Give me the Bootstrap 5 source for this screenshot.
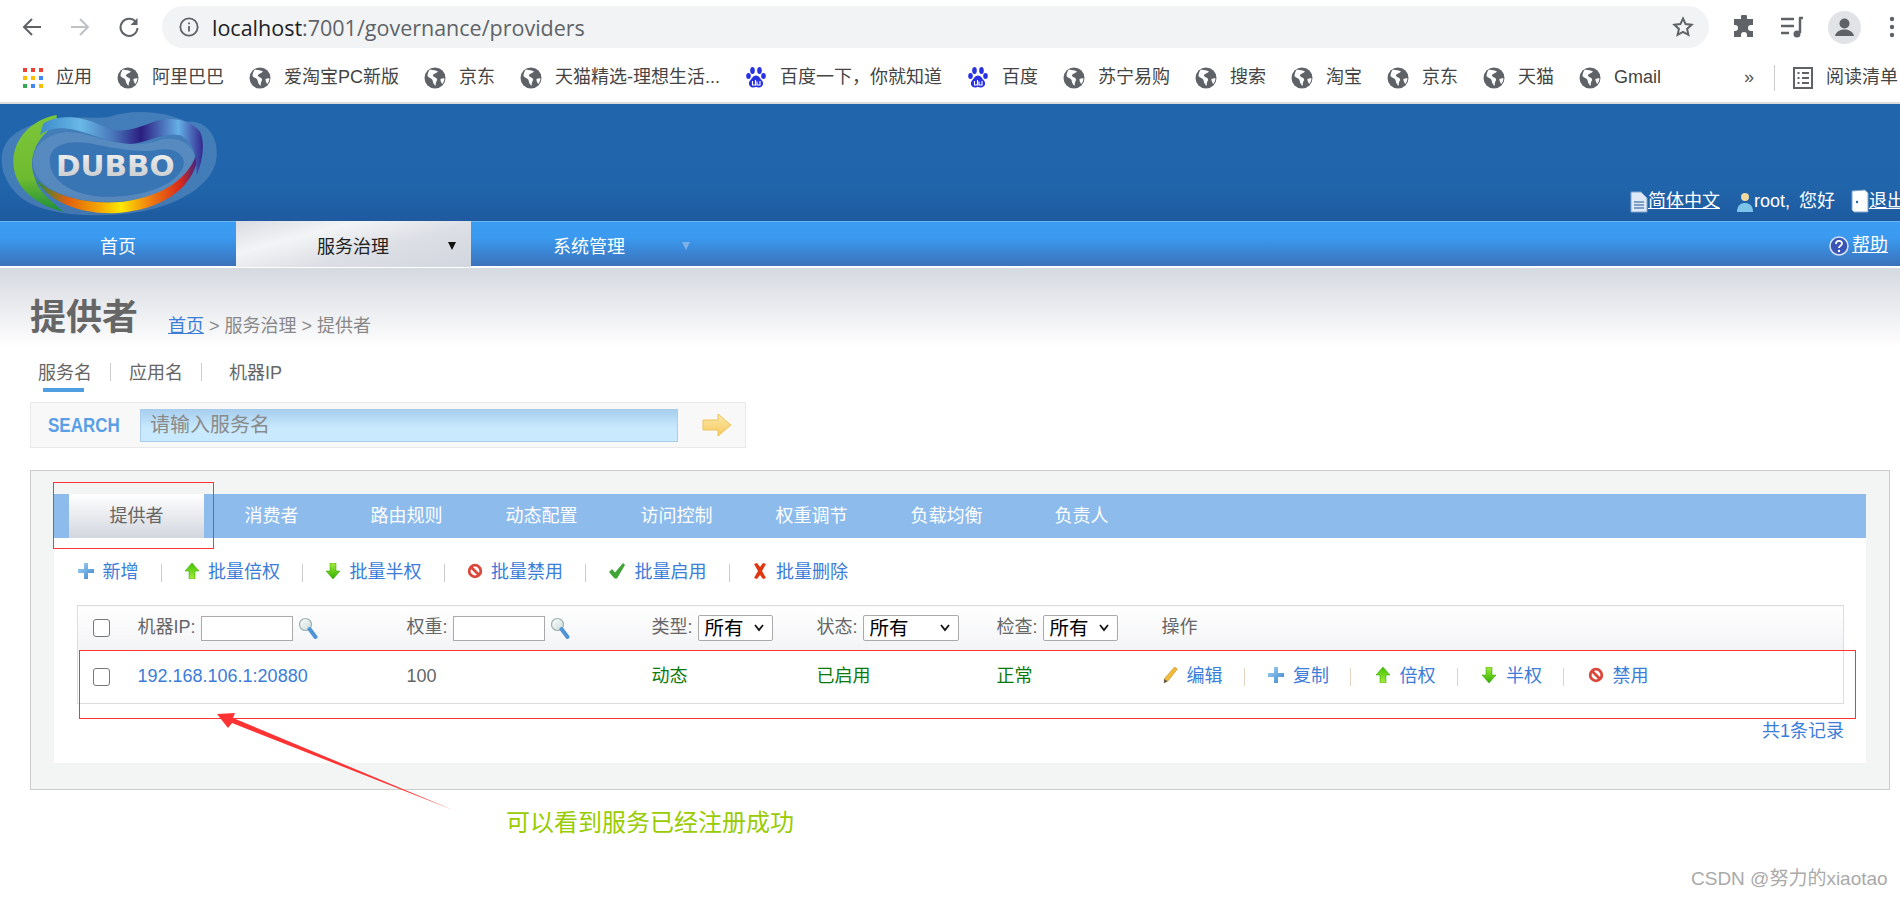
<!DOCTYPE html>
<html lang="zh-CN">
<head>
    <meta charset="UTF-8">
    <meta name="viewport" content="width=device-width, initial-scale=1.0">
    <title>提供者 - Dubbo</title>
    <link href="https://cdn.jsdelivr.net/npm/bootstrap@5.3.0/dist/css/bootstrap.min.css" rel="stylesheet">
    <style>
        html, body { height: 897px; overflow: hidden; }
        body { position: relative; background: #fff; color: #666; font: 18px/1.2 "Liberation Sans", "Noto Sans CJK SC", sans-serif; }
        a { color: #3b7dd8; text-decoration: none; }

        /* browser chrome */
        .tool-row { height: 54px; padding-left: 22px; }
        .tool-gap { margin-left: 28px; }
        .tool-ext { margin-left: 23px; }
        .addr-bar { margin-left: 22px; width: 1547px; height: 42px; border-radius: 21px; background: #f1f3f4; padding: 0 15px 0 17px; font: 21.500px "Open Sans", sans-serif; color: #5f6368; }
        .addr-bar b { font-weight: 400; color: #202124; }
        .addr-text { margin-left: 13px; }
        .mark-row { height: 50px; padding: 2px 0 2px 23px; border-bottom: 2px solid #dcdcdc; color: #444; white-space: nowrap; overflow: hidden; gap: 25px; }
        .mark-item { display: flex; align-items: center; gap: 13px; flex: none; }
        .mark-more { margin-left: 58px; color: #555; }
        .mark-line { width: 1px; height: 26px; background: #ccc; margin-left: -5px; }
        .mark-read { margin-left: -7px; }

        /* dubbo header and menu */
        .site-head { height: 117px; background: linear-gradient(#2166ad, #2065ab 70%, #1e5a9f); color: #fff; white-space: nowrap; }
        .site-head a, .site-menu a { color: #fff; text-decoration: underline; }
        .head-links { margin-left: 1390px; padding-bottom: 8px; gap: 15px; }
        .head-user { margin-left: 1px; word-spacing: 4px; }
        .site-menu { height: 47px; padding-bottom: 2px; background: linear-gradient(#3a9df2, #3a9af0 35%, #3b72ba) content-box; color: #fff; border-top: 1px solid #6bb5f5; }
        .menu-first { width: 236px; text-align: center; padding-top: 8px; }
        .menu-on { width: 235px; height: 46px; padding: 8px 0 0 81px; background: linear-gradient(165deg, #d8dbe1, #f3f4f6 30%, #dcdfe5 60%, #d2d6de); color: #222; }
        .menu-next { padding: 8px 0 0 82px; }
        .menu-tri { width: 0; height: 0; border-left: 4px solid transparent; border-right: 4px solid transparent; border-top: 8px solid #111; margin-left: 59px; margin-top: -5px; }
        .menu-next .menu-tri { border-top-color: #7fb2ea; margin-left: 57px; }
        .menu-help { margin-left: auto; padding: 4px 12px 0 0; gap: 3px; }

        /* page body */
        .page-wrap { height: 629px; padding: 0 10px 0 30px; background: linear-gradient(#d5d9e0, #fff) no-repeat; background-size: 100% 80px; }
        .page-title { padding-top: 29px; height: 70px; gap: 30px; }
        .page-title h1 { margin: 0; font-size: 36px; line-height: 40px; font-weight: 700; color: #666; }
        .crumb { color: #888; }
        .crumb a { color: #3b7dd8; text-decoration: underline; }
        .find-tabs { padding-left: 8px; height: 32px; margin-top: 25px; }
        .find-item { width: 54px; position: relative; flex: none; white-space: nowrap; }
        .find-ip { margin-left: 9px; }
        .find-bar { display: block; position: absolute; left: 5px; top: 25px; width: 41px; height: 4px; background: #4f9ee2; }
        .find-sep { width: 1px; height: 18px; background: #ccc; margin: 0 18px; }
        .find-box { width: 716px; height: 46px; margin-top: 7px; border: 1px solid #e9e9e9; background: #f8f8f8; padding-left: 17px; }
        .find-word { width: 92px; font-weight: 700; font-size: 20px; color: #5a9fe6; transform: scaleX(.85); transform-origin: left center; }
        .find-input { width: 538px; height: 33px; border: 1px solid #a9cdea; padding: 0 9px; background: linear-gradient(#a8cfee, #c9eafe 60%); color: #8a8a8a; font-size: 20px; line-height: 31px; }
        .find-go { margin-left: 24px; }

        .main-panel { height: 320px; margin-top: 22px; padding: 23px 23px 26px; border: 1px solid #ccc; background: #f3f5f5; }
        .panel-body { height: 269px; background: #fff; }
        .panel-tabs { height: 44px; padding-left: 15px; background: #8cbbec; color: #fff; }
        .panel-tab { width: 135px; text-align: center; flex: none; line-height: 44px; }
        .panel-tab.on { background: linear-gradient(#fff, #d2d6de); color: #666; }
        .act-row { gap: 22px; }
        .act-item { display: flex; align-items: center; gap: 8.500px; flex: none; }
        .act-item svg { margin-top: -4px; }
        .act-sep { width: 1px; height: 18px; background: #ccc; }
        .panel-acts { height: 67px; padding: 3px 0 0 24px; }

        .grid-wrap { padding: 0 22px 0 23px; }
        .prov-grid { table-layout: fixed; width: 100%; margin: 0; border: 1px solid #ddd; border-collapse: collapse; color: #666; }
        .prov-grid td, .prov-grid th { padding: 0; font-weight: 400; border: 0; vertical-align: middle; }
        .prov-grid thead th { height: 45px; background: linear-gradient(#fff, #f2f3f5); white-space: nowrap; }
        .prov-grid tbody td { height: 53px; border-bottom: 1px solid #ddd; }
        .prov-grid .form-check-input { width: 17px; height: 18px; margin: 0 0 0 15px; border: 1px solid #777; border-radius: 3px; float: none; display: block; }
        .prov-grid .act-sep { background: #e2d2bf; margin-right: 2.500px; }
        .prov-grid .act-row { gap: 21px; }
        .prov-grid .act-item { gap: 9px; }
        .grid-head { gap: 5px; }
        .grid-input { width: 92px; height: 25px; border: 1px solid #aaa; background: #fff; }
        .grid-select { height: 26px; border: 1px solid #aaa; border-radius: 2px; color: #000; font: 19.500px/1 "Liberation Sans", "Noto Sans CJK SC", sans-serif; padding: 0 0 0 6px; appearance: none; background: #fff url("data:image/svg+xml,%3Csvg xmlns='http://www.w3.org/2000/svg' width='10' height='8'%3E%3Cpath d='M1 1l4 5 4-5' fill='none' stroke='%23111' stroke-width='1.800'/%3E%3C/svg%3E") no-repeat right 8px center; }
        .sel-short { width: 75px; }
        .sel-wide { width: 96px; }
        .col-check { width: 60px; }
        .col-ip { width: 269px; }
        .col-weight { width: 245px; }
        .col-type { width: 165px; }
        .col-state { width: 180px; }
        .col-check2 { width: 165px; }
        .ok-text { color: #0a7a0a; }
        .grid-total { text-align: right; padding-top: 17px; }

        /* annotation drawn over the screenshot */
        .mark-layer { position: absolute; left: 0; top: 0; pointer-events: none; }
        .note-text { position: absolute; left: 506px; top: 809px; font-size: 24px; line-height: 28px; color: #99cc00; }
        .water-text { position: absolute; left: 1691px; top: 868px; color: #aaa; font-size: 19px; }
    </style>
</head>
<body>
    <svg width="0" height="0" class="position-absolute">
        <defs>
            <linearGradient id="gPlus" x1="0" y1="0" x2="1" y2="1"><stop offset="0" stop-color="#a5d4f4"/><stop offset="1" stop-color="#3a86cf"/></linearGradient>
            <linearGradient id="gGreen" x1="0" y1="0" x2="0" y2="1"><stop offset="0" stop-color="#3fc400"/><stop offset="1" stop-color="#a5ea3a"/></linearGradient>
            <linearGradient id="gGreen2" x1="0" y1="0" x2="0" y2="1"><stop offset="0" stop-color="#a5ea3a"/><stop offset="1" stop-color="#2fb000"/></linearGradient>
            <linearGradient id="gMagn" x1="0" y1="0" x2="1" y2="1"><stop offset="0" stop-color="#fff"/><stop offset="1" stop-color="#c8d8d8"/></linearGradient>
            <linearGradient id="gGo" x1="0" y1="0" x2="0" y2="1"><stop offset="0" stop-color="#fbe9a8"/><stop offset="1" stop-color="#f6c95e"/></linearGradient>

            <symbol id="icPlus" viewBox="0 0 16 16"><path d="M6 0h4v6h6v4h-6v6H6v-6H0V6h6z" fill="url(#gPlus)"/></symbol>
            <symbol id="icUp" viewBox="0 0 16 16"><path d="M8 0l7 8h-4v8H5V8H1z" fill="url(#gGreen)" stroke="#2d9d00" stroke-width=".5"/></symbol>
            <symbol id="icDown" viewBox="0 0 16 16"><path d="M5 0h6v8h4l-7 8-7-8h4z" fill="url(#gGreen2)" stroke="#2d9d00" stroke-width=".5"/></symbol>
            <symbol id="icBan" viewBox="0 0 16 16"><circle cx="8" cy="8" r="5.800" fill="#fff" stroke="#d9483b" stroke-width="2.800"/><path d="M4 4l8 8" stroke="#d9483b" stroke-width="2.800"/></symbol>
            <symbol id="icOk" viewBox="0 0 18 16"><path d="M1 9l3-3 3 3.500L15 0l2 2-8 13.500H6.500z" fill="#3fa535"/></symbol>
            <symbol id="icDel" viewBox="0 0 16 16"><path d="M2 1l3-1 3 4 3-4 3 1-4 7 4 7-3 1-3-4-3 4-3-1 4-7z" fill="#e0360f"/></symbol>
            <symbol id="icEdit" viewBox="0 0 16 16"><path d="M12.500 0l3 2-9.500 12-4 2 .5-4.500z" fill="#f0b93a" stroke="#b98a20" stroke-width=".5"/><path d="M2.200 12l3.300 2.300L2 16z" fill="#555"/></symbol>
            <symbol id="icMagn" viewBox="0 0 20 22"><circle cx="7.500" cy="7.500" r="6" fill="url(#gMagn)" stroke="#9fb0b0" stroke-width="1.200"/><path d="M11.500 12l6 8" stroke="#4f95d5" stroke-width="4" stroke-linecap="round"/></symbol>
            <symbol id="icGlobe" viewBox="0 0 22 24"><circle cx="11" cy="12" r="10.500" fill="#5f6368"/><path d="M6 3.500c3 1 6 .5 8 2-1 2-4 1.500-5 3.500-.7 2 3 2 4 4 .6 2-2 3-1 6.500-2.500-.5-3-3.500-3.500-5.500-1-2-3.500-2-5-4 0-2.500 1-5 2.500-6.500zM16.500 13c1.500-.5 3-1 4-.5-.2 2-1 4-2.300 5.500-1-1.500-2-3.500-1.700-5z" fill="#fff"/></symbol>
            <symbol id="icPaw" viewBox="0 0 20 24"><g fill="#2932e1"><ellipse cx="6.500" cy="4.500" rx="2.300" ry="3.500"/><ellipse cx="13.500" cy="4.500" rx="2.300" ry="3.500"/><ellipse cx="2.500" cy="10" rx="2.300" ry="3"/><ellipse cx="17.500" cy="10" rx="2.300" ry="3"/><path d="M10 9.500c3 0 4 3 6 5 2.500 3 .5 7-3 7-1.500 0-2-.5-3-.5s-1.500.5-3 .5c-3.500 0-5.500-4-3-7 2-2 3-5 6-5z"/></g><path d="M6.500 15v4h3v-5M11 15.500v3.500h3v-4" fill="none" stroke="#fff" stroke-width="1.100"/></symbol>
        </defs>
    </svg>

    <!-- browser toolbar -->
    <div class="tool-row d-flex align-items-center">
        <svg width="20" height="20" viewBox="0 0 20 20"><path d="M19 10H2M10 2l-8 8 8 8" fill="none" stroke="#5f6368" stroke-width="2"/></svg>
        <svg width="20" height="20" viewBox="0 0 20 20" class="tool-gap"><path d="M1 10h17M10 2l8 8-8 8" fill="none" stroke="#bdc1c6" stroke-width="2"/></svg>
        <svg width="22" height="22" viewBox="0 0 22 22" class="tool-gap"><path d="M18 6.500A8.500 8.500 0 1 0 19.500 12" fill="none" stroke="#5f6368" stroke-width="2"/><path d="M19.500 2v7h-7z" fill="#5f6368"/></svg>
        <div class="addr-bar d-flex align-items-center">
            <svg width="20" height="20" viewBox="0 0 22 22"><circle cx="11" cy="11" r="9.500" fill="none" stroke="#5f6368" stroke-width="2"/><path d="M11 10v6M11 6v2" stroke="#5f6368" stroke-width="2"/></svg>
            <span class="addr-text"><b>localhost</b>:7001/governance/providers</span>
            <svg width="22" height="22" viewBox="0 0 22 22" class="ms-auto"><path d="M11 2.500l2.600 5.600 6 .7-4.500 4.100 1.300 6L11 15.900l-5.400 3 1.300-6L2.400 8.800l6-.7z" fill="none" stroke="#5f6368" stroke-width="2"/></svg>
        </div>
        <svg width="24" height="24" viewBox="0 0 24 24" class="tool-ext"><path d="M9 2a3 3 0 0 1 6 0v2h6v6h-2a3 3 0 0 0 0 6h2v6h-6v-2a3 3 0 0 0-6 0v2H2v-6h1a3 3 0 0 0 0-6H2V4h7z" fill="#5f6368"/></svg>
        <svg width="24" height="24" viewBox="0 0 24 24" class="ms-4"><path d="M1 4h13M1 11h13M1 18h8" stroke="#5f6368" stroke-width="2.500"/><path d="M19 3h4M20 3v15" stroke="#5f6368" stroke-width="2.500"/><circle cx="17" cy="19" r="3.500" fill="#5f6368"/></svg>
        <svg width="33" height="33" viewBox="0 0 33 33" class="ms-4"><circle cx="16.500" cy="16.500" r="16.500" fill="#e1e3e6"/><circle cx="16.500" cy="12.500" r="5" fill="#5f6368"/><path d="M7 25c1-5 6-6.500 9.500-6.500S25 20 26 25z" fill="#5f6368"/></svg>
        <svg width="6" height="24" viewBox="0 0 6 24" class="tool-gap"><circle cx="3" cy="4" r="2.200" fill="#5f6368"/><circle cx="3" cy="12" r="2.200" fill="#5f6368"/><circle cx="3" cy="20" r="2.200" fill="#5f6368"/></svg>
    </div>

    <!-- bookmarks -->
    <div class="mark-row d-flex align-items-center">
        <span class="mark-item">
            <svg width="20" height="20" viewBox="0 0 20 20">
                <g fill="#ea4335"><rect width="4" height="4"/><rect x="8" width="4" height="4"/><rect x="16" width="4" height="4"/></g>
                <g fill="#fbbc04"><rect y="8" width="4" height="4"/><rect x="8" y="8" width="4" height="4"/></g>
                <rect x="16" y="8" width="4" height="4" fill="#4285f4"/>
                <rect y="16" width="4" height="4" fill="#34a853"/><rect x="8" y="16" width="4" height="4" fill="#4285f4"/><rect x="16" y="16" width="4" height="4" fill="#fbbc04"/>
            </svg>应用</span>
        <span class="mark-item"><svg width="22" height="24"><use href="#icGlobe"/></svg>阿里巴巴</span>
        <span class="mark-item"><svg width="22" height="24"><use href="#icGlobe"/></svg>爱淘宝PC新版</span>
        <span class="mark-item"><svg width="22" height="24"><use href="#icGlobe"/></svg>京东</span>
        <span class="mark-item"><svg width="22" height="24"><use href="#icGlobe"/></svg>天猫精选-理想生活...</span>
        <span class="mark-item"><svg width="22" height="24"><use href="#icPaw"/></svg>百度一下，你就知道</span>
        <span class="mark-item"><svg width="22" height="24"><use href="#icPaw"/></svg>百度</span>
        <span class="mark-item"><svg width="22" height="24"><use href="#icGlobe"/></svg>苏宁易购</span>
        <span class="mark-item"><svg width="22" height="24"><use href="#icGlobe"/></svg>搜索</span>
        <span class="mark-item"><svg width="22" height="24"><use href="#icGlobe"/></svg>淘宝</span>
        <span class="mark-item"><svg width="22" height="24"><use href="#icGlobe"/></svg>京东</span>
        <span class="mark-item"><svg width="22" height="24"><use href="#icGlobe"/></svg>天猫</span>
        <span class="mark-item"><svg width="22" height="24"><use href="#icGlobe"/></svg>Gmail</span>
        <span class="mark-more">»</span>
        <span class="mark-line"></span>
        <span class="mark-item"><svg width="20" height="22" viewBox="0 0 20 22" class="mark-read"><rect x="1" y="1" width="18" height="20" fill="none" stroke="#5f6368" stroke-width="2"/><path d="M4.500 6h2M9 6h7M4.500 11h2M9 11h7M4.500 16h2M9 16h7" stroke="#5f6368" stroke-width="2"/></svg>阅读清单</span>
    </div>

    <!-- site header -->
    <div class="site-head d-flex align-items-end">
        <svg width="240" height="117" viewBox="0 12 720 351" class="flex-shrink-0 align-self-start">
            <defs>
                <linearGradient id="gRing" x1="0" y1="0" x2="1" y2="0">
                    <stop offset="0" stop-color="#1d8f3c"/><stop offset=".2" stop-color="#e0600f"/><stop offset=".4" stop-color="#f5a800"/><stop offset=".53" stop-color="#ffe800"/><stop offset=".7" stop-color="#f0820f"/><stop offset=".9" stop-color="#d8281a"/><stop offset="1" stop-color="#3a2488"/>
                </linearGradient>
                <linearGradient id="gRibbon" x1="0" y1="0" x2="1" y2="0">
                    <stop offset="0" stop-color="#3d8bcc"/><stop offset=".25" stop-color="#69b8e6"/><stop offset=".45" stop-color="#4876bb"/><stop offset=".62" stop-color="#2b1d80"/><stop offset=".85" stop-color="#64b0e6"/><stop offset="1" stop-color="#33288e"/>
                </linearGradient>
                <linearGradient id="gLeaf" x1="0" y1="0" x2="0" y2="1"><stop offset="0" stop-color="#7cc63a"/><stop offset=".65" stop-color="#6fbb30"/><stop offset="1" stop-color="#1d8f3c"/></linearGradient>
                <linearGradient id="gWord" x1="0" y1="0" x2="0" y2="1"><stop offset="0" stop-color="#f4f4f4"/><stop offset="1" stop-color="#c4c6c8"/></linearGradient>
            </defs>
            <path d="M5 180C5 120 50 90 110 70 200 40 280 60 330 50 400 25 500 35 560 65 620 60 655 110 650 170 645 240 560 310 420 335 300 355 130 350 60 290 25 260 5 220 5 180Z" fill="#fff" opacity=".16"/>
            <path d="M100 170C110 120 170 85 240 100 320 120 400 150 480 120 540 105 590 140 585 190 575 250 470 300 340 305 190 310 85 250 100 170Z" fill="#fff" opacity=".1"/>
            <path d="M150 170C160 130 210 120 270 130 340 145 420 160 470 150 530 140 560 170 550 200 530 250 450 285 340 290 220 295 140 240 150 170Z" fill="#2065ab" opacity=".55"/>
            <path d="M170 45C90 60 40 120 40 185 40 250 90 310 190 335 150 300 110 270 105 235 85 190 95 120 170 72Z" fill="url(#gLeaf)"/>
            <path d="M105 235C140 300 230 342 340 340 450 335 560 290 590 190L592 150C575 230 490 290 370 305 260 315 160 290 105 235Z" fill="url(#gRing)"/>
            <path d="M130 70C170 45 240 45 300 75 360 110 420 80 470 62 520 50 570 60 600 95 615 125 610 180 590 225 590 170 585 130 540 105 490 95 440 130 390 132 320 130 260 90 190 85 160 85 140 90 120 105Z" fill="url(#gRibbon)"/>
            <text x="168" y="228" font-family="DejaVu Sans, sans-serif" font-weight="700" font-size="86" textLength="356" lengthAdjust="spacingAndGlyphs" fill="url(#gWord)">DUBBO</text>
        </svg>
        <div class="head-links d-flex align-items-end">
            <span class="d-flex align-items-end">
                <svg width="18" height="22" viewBox="0 0 18 22"><path d="M1 1h10l6 6v14H1z" fill="#dfe9f5" stroke="#7fa5d0"/><path d="M4 11h10M4 14h10M4 17h10" stroke="#5f86b5" stroke-width="1.500"/></svg>
                <a href="#">简体中文</a>
            </span>
            <span class="head-user d-flex align-items-end">
                <svg width="18" height="22" viewBox="0 0 18 22"><circle cx="9" cy="6" r="4" fill="#f0d9a0"/><path d="M1 21c0-7 4-9 8-9s8 2 8 9z" fill="#7cc4ea"/></svg>
                <span>root, 您好</span>
            </span>
            <span class="d-flex align-items-end">
                <svg width="19" height="24" viewBox="0 0 19 24"><path d="M2 2l13-1 3 3v19H4L2 21z" fill="#fff" stroke="#7fa5d0"/><circle cx="7" cy="13" r="1.200" fill="#2065ab"/></svg>
                <a href="#">退出</a>
            </span>
        </div>
    </div>

    <!-- site menu -->
    <div class="site-menu d-flex align-items-center">
        <div class="menu-first">首页</div>
        <div class="menu-on d-flex align-items-center"><span>服务治理</span><i class="menu-tri"></i></div>
        <div class="menu-next d-flex align-items-center"><span>系统管理</span><i class="menu-tri"></i></div>
        <div class="menu-help d-flex align-items-center">
            <svg width="20" height="20" viewBox="0 0 20 20"><circle cx="10" cy="10" r="9" fill="#3a55b5" stroke="#d5e3f5" stroke-width="1.500"/><path d="M7 8c0-4 6-4 6-.5 0 2.500-3 2-3 4.500" fill="none" stroke="#fff" stroke-width="1.800"/><circle cx="10" cy="15" r="1.200" fill="#fff"/></svg>
            <a href="#">帮助</a>
        </div>
    </div>

    <!-- page content -->
    <div class="page-wrap">
        <div class="page-title d-flex align-items-end">
            <h1>提供者</h1>
            <div class="crumb"><a href="#">首页</a> &gt; 服务治理 &gt; 提供者</div>
        </div>

        <div class="find-tabs d-flex align-items-start">
            <span class="find-item">服务名<i class="find-bar"></i></span>
            <span class="find-sep"></span>
            <span class="find-item">应用名</span>
            <span class="find-sep"></span>
            <span class="find-item find-ip">机器IP</span>
        </div>

        <div class="find-box d-flex align-items-center">
            <span class="find-word">SEARCH</span>
            <div class="find-input">请输入服务名</div>
            <svg class="find-go" width="30" height="24" viewBox="0 0 30 24"><path d="M1 7h15V1l13 11-13 11v-6H1z" fill="url(#gGo)" stroke="#eec35a"/></svg>
        </div>

        <div class="main-panel">
            <div class="panel-body">
                <div class="panel-tabs d-flex">
                    <div class="panel-tab on">提供者</div>
                    <div class="panel-tab">消费者</div>
                    <div class="panel-tab">路由规则</div>
                    <div class="panel-tab">动态配置</div>
                    <div class="panel-tab">访问控制</div>
                    <div class="panel-tab">权重调节</div>
                    <div class="panel-tab">负载均衡</div>
                    <div class="panel-tab">负责人</div>
                </div>

                <div class="panel-acts act-row d-flex align-items-center">
                    <a href="#" class="act-item"><svg width="16" height="16"><use href="#icPlus"/></svg>新增</a>
                    <span class="act-sep"></span>
                    <a href="#" class="act-item"><svg width="16" height="16"><use href="#icUp"/></svg>批量倍权</a>
                    <span class="act-sep"></span>
                    <a href="#" class="act-item"><svg width="16" height="16"><use href="#icDown"/></svg>批量半权</a>
                    <span class="act-sep"></span>
                    <a href="#" class="act-item"><svg width="16" height="16"><use href="#icBan"/></svg>批量禁用</a>
                    <span class="act-sep"></span>
                    <a href="#" class="act-item"><svg width="18" height="16"><use href="#icOk"/></svg>批量启用</a>
                    <span class="act-sep"></span>
                    <a href="#" class="act-item"><svg width="16" height="16"><use href="#icDel"/></svg>批量删除</a>
                </div>

                <div class="grid-wrap">
                    <table class="prov-grid">
                        <colgroup>
                            <col class="col-check"><col class="col-ip"><col class="col-weight"><col class="col-type"><col class="col-state"><col class="col-check2"><col>
                        </colgroup>
                        <thead>
                            <tr>
                                <th><input type="checkbox" class="form-check-input"></th>
                                <th><div class="grid-head d-flex align-items-center">机器IP:<span class="grid-input"></span><svg width="20" height="22"><use href="#icMagn"/></svg></div></th>
                                <th><div class="grid-head d-flex align-items-center">权重:<span class="grid-input"></span><svg width="20" height="22"><use href="#icMagn"/></svg></div></th>
                                <th><div class="grid-head d-flex align-items-center">类型:<select class="grid-select sel-short"><option>所有</option></select></div></th>
                                <th><div class="grid-head d-flex align-items-center">状态:<select class="grid-select sel-wide"><option>所有</option></select></div></th>
                                <th><div class="grid-head d-flex align-items-center">检查:<select class="grid-select sel-short"><option>所有</option></select></div></th>
                                <th>操作</th>
                            </tr>
                        </thead>
                        <tbody>
                            <tr>
                                <td><input type="checkbox" class="form-check-input"></td>
                                <td><a href="#">192.168.106.1:20880</a></td>
                                <td>100</td>
                                <td class="ok-text">动态</td>
                                <td class="ok-text">已启用</td>
                                <td class="ok-text">正常</td>
                                <td>
                                    <div class="act-row d-flex align-items-center">
                                        <a href="#" class="act-item"><svg width="16" height="16"><use href="#icEdit"/></svg>编辑</a>
                                        <span class="act-sep"></span>
                                        <a href="#" class="act-item"><svg width="16" height="16"><use href="#icPlus"/></svg>复制</a>
                                        <span class="act-sep"></span>
                                        <a href="#" class="act-item"><svg width="16" height="16"><use href="#icUp"/></svg>倍权</a>
                                        <span class="act-sep"></span>
                                        <a href="#" class="act-item"><svg width="16" height="16"><use href="#icDown"/></svg>半权</a>
                                        <span class="act-sep"></span>
                                        <a href="#" class="act-item"><svg width="16" height="16"><use href="#icBan"/></svg>禁用</a>
                                    </div>
                                </td>
                            </tr>
                        </tbody>
                    </table>
                    <div class="grid-total"><a href="#">共1条记录</a></div>
                </div>
            </div>
        </div>
    </div>

    <!-- red marks added on top of the screenshot -->
    <svg class="mark-layer" width="1900" height="897">
        <rect x="53.500" y="482.500" width="160" height="66" fill="none" stroke="#f33" stroke-width="1"/>
        <rect x="79.500" y="650.500" width="1776" height="68" fill="none" stroke="#f33" stroke-width="1"/>
        <path d="M217 714L235 713 233 718 453 810 232 723 228 728Z" fill="#f33"/>
    </svg>
    <div class="note-text">可以看到服务已经注册成功</div>
    <div class="water-text">CSDN @努力的xiaotao</div>

    <script src="https://cdn.jsdelivr.net/npm/bootstrap@5.3.0/dist/js/bootstrap.bundle.min.js"></script>
</body>
</html>
